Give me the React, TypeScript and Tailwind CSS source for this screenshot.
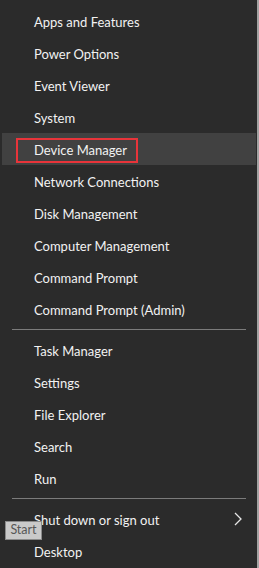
const groups: string[][] = [
  [
    "Apps and Features",
    "Power Options",
    "Event Viewer",
    "System",
    "Device Manager",
    "Network Connections",
    "Disk Management",
    "Computer Management",
    "Command Prompt",
    "Command Prompt (Admin)",
  ],
  ["Task Manager", "Settings", "File Explorer", "Search", "Run"],
];

function Row({ label, active, arrow }: { label: string; active?: boolean; arrow?: boolean }) {
  return (
    <div
      className={`relative flex h-[32px] items-center pl-[32px] pr-[14px] ${
        active ? "bg-[#414141]" : ""
      }`}
    >
      <span className="pt-[2px] text-[13px] leading-none text-[#f2f2f2]">{label}</span>
      {arrow && (
        <svg className="ml-auto" width="8" height="14" viewBox="0 0 8 14" fill="none">
          <polyline points="1,1 7,7 1,13" stroke="#e6e6e6" strokeWidth="1.3" />
        </svg>
      )}
      {active && (
        <div className="absolute left-[14px] top-[5px] h-[25px] w-[122px] border-2 border-[#e8343a]" />
      )}
    </div>
  );
}

function Separator() {
  return (
    <div className="flex h-[9px] items-center px-[10px]">
      <div className="h-px w-full bg-[#7b7b7b]" />
    </div>
  );
}

export default function App() {
  return (
    <div
      className="relative h-[568px] w-[259px] overflow-hidden bg-[#2b2b2b] pt-[5px] pl-[2px] pr-[3px]"
      style={{ fontFamily: 'Lato, "Noto Sans", sans-serif' }}
    >
      {groups.map((items, i) => (
        <div key={i}>
          {items.map((label) => (
            <Row key={label} label={label} active={label === "Device Manager"} />
          ))}
          <Separator />
        </div>
      ))}
      <Row label="Shut down or sign out" arrow />
      <Row label="Desktop" />

      <div className="absolute right-0 top-0 h-full w-[2px] bg-[#a3a3a3]" />

      <div className="absolute left-[5px] top-[521px] flex h-[19px] w-[37px] items-center justify-center border border-[#8a8a8a] bg-[#c9c9c9] text-[12.5px] leading-none text-[#575757]">
        Start
      </div>
    </div>
  );
}
